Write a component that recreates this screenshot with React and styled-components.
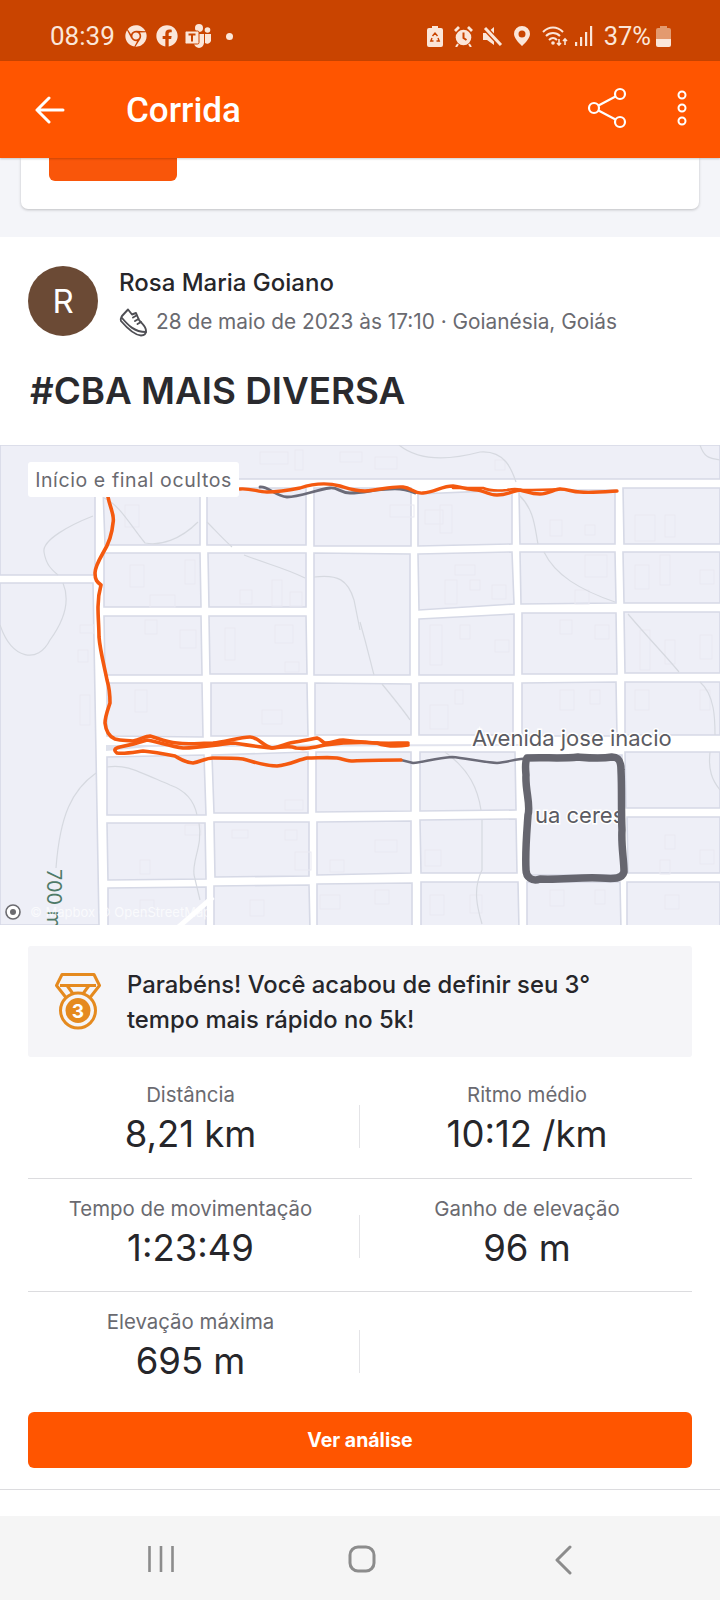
import React from "react";
import styled, { createGlobalStyle } from "styled-components";
import { FaChrome, FaFacebook } from "react-icons/fa";

const Global = createGlobalStyle`
  html, body { margin: 0; padding: 0; background: #fff; }
  * { box-sizing: border-box; }
`;

const Page = styled.div`
  width: 720px; height: 1600px; overflow: hidden; display: flex; flex-direction: column;
  font-family: Inter, "Liberation Sans", sans-serif; background: #fff;
`;
const StatusBar = styled.div`
  height: 61px; flex: none; background: #c94400; color: #fbe6d9; display: flex; align-items: center;
  justify-content: space-between; padding: 11px 49px 0 50px;
  font-family: Roboto, sans-serif;
`;
const StatusGroup = styled.div` display: flex; align-items: center; `;
const Slot = styled.span` display: flex; margin-left: ${p => p.$ml || 0}px; `;
const Clock = styled.span` font-size: 26px; `;
const Dot = styled.span`
  width: 7px; height: 7px; border-radius: 50%; background: #fbe6d9; margin-left: 14px;
`;
const Percent = styled.span` font-size: 25.5px; margin-left: 10px; `;
const AppBar = styled.header`
  height: 97px; flex: none; background: #ff5500; color: #fff; display: flex; align-items: center;
  padding: 0 33px 0 35px; position: relative; z-index: 2; box-shadow: 0 1px 2px rgba(0,0,0,.2);
`;
const AppTitle = styled.h1`
  margin: 2px 0 0 61px; flex: 1; font: 500 35px Roboto, sans-serif;
`;
const AppActions = styled.div` display: flex; align-items: center; gap: 48px; padding-bottom: 3px; `;
const Backdrop = styled.div`
  height: 79px; flex: none; background: #f4f5f9; padding: 0 21px; 
`;
const ClippedCard = styled.div`
  height: 51px; background: #fff; border-radius: 0 0 7px 7px; box-shadow: 0 1px 3px rgba(0,0,0,.22);
  padding: 0 28px;
`;
const ClippedButton = styled.div`
  width: 128px; height: 23px; background: #f9560a; border-radius: 0 0 6px 6px;
`;
const Post = styled.section` flex: 1; background: #fff; display: flex; flex-direction: column; `;
const Author = styled.div`
  display: flex; gap: 21px; padding: 29px 28px 0;
`;
const Avatar = styled.div`
  width: 70px; height: 70px; border-radius: 50%; background: #6b4a35; color: #fff; flex: none;
  display: flex; align-items: center; justify-content: center; font-size: 33px; font-weight: 400;
`;
const AuthorInfo = styled.div` display: flex; flex-direction: column; padding-top: 4px; `;
const AuthorName = styled.div`
  font-size: 24px; font-weight: 500; color: #26262a; line-height: 26px;
`;
const AuthorMeta = styled.div`
  display: flex; align-items: center; gap: 9px; margin-top: 11px; font-size: 20.8px; color: #6a6a70; line-height: 30px;
`;
const PostTitle = styled.h2`
  margin: 32px 0 0 30px; font-size: 36.8px; line-height: 44px; font-weight: 600; color: #2a2a2e;
`;
const MapWrap = styled.div`
  position: relative; height: 480px; margin-top: 32px; flex: none; overflow: hidden; background: #fff;
  svg { display: block; }
`;
const MapBadge = styled.div`
  position: absolute; left: 28px; top: 17px; height: 35px; width: 211px; background: #fff; border-radius: 3px;
  color: #6a6a70; font-size: 19.5px; display: flex; align-items: center; justify-content: center; letter-spacing: .6px;
`;
const Banner = styled.div`
  margin: 21px 28px 0; height: 111px; background: #f5f5f8; border-radius: 3px; display: flex; align-items: center;
  padding: 0 60px 0 27px; gap: 26px;
  svg { flex: none; }
`;
const BannerText = styled.div`
  font-size: 23.8px; line-height: 35px; font-weight: 500; color: #26262a;
`;
const Stats = styled.div` margin: 8px 28px 0; `;
const StatRow = styled.div`
  display: grid; grid-template-columns: 325px 9px 330px; height: ${p => p.$h}px;
  border-bottom: ${p => p.$line ? "1px solid #dcdcdf" : "none"};
`;
const StatCell = styled.div`
  display: flex; flex-direction: column; align-items: center; padding-top: ${p => p.$top}px;
`;
const StatLabel = styled.div` font-size: 20.4px; line-height: 26px; color: #6a6a70; `;
const StatValue = styled.div` font-size: 36.5px; line-height: 44px; color: #26262a; margin-top: 4px; `;
const Divider = styled.div`
  width: 1px; height: 43px; background: #e4e4e7; justify-self: end; margin: ${p => p.$top}px 2px 0 0;
`;
const Action = styled.button`
  margin: 0 28px; height: 56px; border: 0; border-radius: 6px; background: #ff5500; color: #fff; flex: none;
  font: 700 19.5px Inter, sans-serif;
`;
const Rule = styled.div` height: 1px; background: #dcdcdf; margin-top: 21px; flex: none; `;
const Spacer = styled.div` flex: 1; `;
const NavBar = styled.nav`
  height: 84px; flex: none; background: #f5f5f5; display: grid; grid-template-columns: 200px 206px auto; align-items: start;
  padding: 29px 0 0 148px;
`;

const blocks = [
  "0,445 720,445 720,479 95,479 95,575 0,575",
  "0,583 93,583 99,925 0,925",
  // row 1
  "103,488 200,488 200,545 105,545", "207,488 306,488 306,545 207,545", "314,488 411,488 411,546 314,546", "418,494 512,490 512,544 418,546", "519,490 615,490 615,544 520,544", "623,488 720,488 720,544 624,544",
  // row 2
  "104,553 200,553 201,607 104,607", "208,553 306,553 306,607 209,607", "314,553 410,554 410,630 410,675 314,675", "418,554 512,552 514,604 419,610", "520,552 615,552 616,603 521,604", "623,552 720,552 720,603 624,603",
  // row 3
  "104,616 201,616 202,675 105,675", "209,616 306,616 307,674 210,674", "419,619 514,614 514,675 419,675", "522,613 616,613 617,674 522,674", "624,612 720,612 720,673 625,673",
  // row 4
  "107,683 202,683 203,737 107,736", "211,683 307,683 308,736 211,736", "315,683 411,684 411,735 315,735", "419,683 513,683 513,735 419,735", "522,683 616,682 617,736 522,736", "625,682 720,682 720,735 625,735",
  // row 5
  "107,757 204,755 206,815 107,815", "212,755 308,752 308,813 214,813", "316,752 411,752 411,811 316,812", "420,752 515,752 516,810 420,811", "625,752 720,752 720,808 626,808",
  // loop block, rows 5 and 6
  "526,755 622,755 622,875 526,875",
  // row 6
  "107,823 205,823 206,879 108,880", "214,822 309,822 309,876 215,877", "317,822 411,821 411,873 317,875", "420,820 516,819 517,873 421,873", "627,817 720,817 720,873 628,873",
  // row 7
  "108,888 206,887 206,930 108,930", "214,886 309,885 310,930 214,930", "317,884 412,883 412,930 317,930", "421,882 518,882 519,930 421,930", "527,882 620,882 621,930 527,930", "627,882 720,882 720,930 627,930",
];

const streams = [
  "M93 516 C70 525 42 540 44 552 C46 565 52 570 58 575",
  "M63 583 C70 600 66 618 50 640 C38 664 12 660 0 625",
  "M104 498 C120 505 130 525 145 543 C160 546 180 540 198 522",
  "M207 522 C215 530 222 538 232 547 M244 555 C270 565 285 568 305 578",
  "M314 577 C338 574 348 580 354 600 L360 630",
  "M399 445 C420 462 450 460 480 452 C505 450 512 470 516 482",
  "M360 622 C368 650 370 660 374 675",
  "M519 495 C535 510 535 530 538 544 M544 552 C555 575 580 590 615 602",
  "M628 614 C650 640 665 655 679 672",
  "M700 445 C705 460 712 458 720 460",
  "M382 684 C395 700 405 712 410 720",
  "M107 767 C125 764 135 770 170 785 C190 792 195 805 197 815 M199 823 C203 845 192 860 194 875 L200 900",
  "M96 773 C72 790 60 815 56 868",
  "M445 752 C470 770 478 790 481 810 M482 820 L482 870 C472 890 478 910 482 924",
  "M700 682 C715 695 715 720 715 735 M710 752 C708 770 712 780 720 790",
];

const faint = [
  [125,505,14,22],[260,452,28,12],[295,450,8,20],[340,452,22,10],[375,457,22,12],[130,565,14,22],[185,560,10,24],[150,595,25,12],[240,590,12,14],[272,580,10,26],[290,592,12,14],
  [145,620,12,14],[180,630,16,18],[225,628,10,32],[275,625,18,18],[285,662,14,10],[80,625,14,8],[78,650,10,12],
  [390,505,24,12],[425,510,18,14],[440,505,12,28],[495,460,10,10],[455,565,20,10],[445,580,12,24],[470,580,10,10],[492,585,14,14],[550,520,12,16],[585,525,10,10],[585,555,22,22],[575,590,14,14],[635,515,20,26],[665,515,10,22],
  [635,565,14,24],[660,555,10,30],[700,570,14,14],[430,625,12,40],[460,625,10,14],[495,640,14,12],[560,620,12,14],[595,625,14,14],[640,630,10,40],[665,640,10,24],[700,635,12,24],
  [80,695,10,30],[135,690,12,22],[262,710,20,14],[430,705,18,24],[455,690,8,14],[560,690,14,20],[590,690,10,14],[635,690,14,20],[700,690,10,20],
  [285,800,18,10],[185,825,16,10],[232,830,16,8],[140,860,10,14],[285,830,12,10],[295,852,16,18],[330,860,14,12],[375,840,22,12],[425,850,16,16],[665,835,10,14],[660,860,10,14],[700,850,14,14],
  [375,890,14,14],[430,895,14,20],[470,895,12,18],[550,890,14,16],[595,890,10,14],[665,895,14,14],[250,900,14,16],[320,895,20,14],[140,900,14,14],
];

const Track = () => (
  <g fill="none" strokeLinecap="round" strokeLinejoin="round">
    <path stroke="#6b6b78" strokeWidth="2.8" d="M260 487 C268 486 275 496 287 497 C300 497 315 490 330 488 C338 487 340 493 350 493 C365 493 375 489 390 489 C400 488 408 490 415 493" />
    <path stroke="#f4590f" strokeWidth="3.4" d="M240 489 C250 488 258 492 267 492 C280 492 290 490 300 488 C312 484 325 482 340 486 C350 489 355 491 365 491 C380 490 392 486 403 487 C412 488 414 494 423 493 C435 492 442 486 453 486 C462 487 468 490 477 490 C483 490 487 495 497 495 C508 495 512 491 520 490 C528 492 532 494 540 494 C548 494 555 489 560 489 C568 489 572 492 580 492 C590 493 602 492 617 491" />
    <path stroke="#f4590f" strokeWidth="2.6" d="M453 488 C465 488 472 488 483 488 C490 491 498 491 507 490 C512 489 516 488 520 490 C530 490 545 490 560 489" />
    <path stroke="#6b6b78" strokeWidth="2.4" d="M401 760 L413 763 C425 762 435 758 452 757 C465 758 482 762 497 763 C508 762 515 759 530 758" />
    <path stroke="#f4590f" strokeWidth="3.6" d="M108 497 C110 508 115 515 113 523 C112 535 108 545 103 553 C99 560 95 567 95 573 C95 580 97 582 101 585 C99 592 98 600 98 607 C98 618 99 627 99 637 C100 650 104 665 107 680 C110 690 110 697 110 703 C107 712 105 717 105 723 C106 732 110 737 115 739 C122 741 127 740 133 741 C140 740 145 736 150 736 C158 738 165 742 177 743 C188 745 200 743 213 743 C225 742 240 737 250 737 C258 737 263 746 272 748 C280 747 285 744 290 743 C300 741 308 740 317 738 C321 739 322 742 325 743 C332 743 337 740 343 740 C350 741 358 742 365 742 C378 744 395 743 408 743" />
    <path stroke="#f4590f" strokeWidth="3.6" d="M408 745 C395 747 385 746 377 743 C360 742 340 743 325 745 C312 748 306 749 296 748 C288 745 280 748 272 748 C258 747 248 745 233 743 C215 745 198 748 183 748 C170 746 158 742 147 740 C138 743 130 745 120 747 C115 748 113 750 117 753 C125 754 135 752 143 751 C155 752 165 754 175 756 C182 760 186 763 193 763 C200 762 206 758 213 758 C225 758 235 758 243 759 C255 762 265 766 277 766 C288 765 298 760 307 758 C318 758 328 757 337 758 C343 759 348 761 353 761 C368 760 385 760 401 760" />
    <path stroke="#66666f" strokeWidth="7.5" d="M527 758 C545 757 560 759 578 757 C590 758 600 759 612 757 C618 757 621 760 621 770 C622 790 621 810 622 830 C621 845 624 860 624 872 C622 879 615 879 600 878 C580 877 560 880 540 879 C532 882 526 877 526 870 C525 850 527 830 528 815 C531 805 525 790 526 775 C525 765 526 760 527 758 Z" />
  </g>
);

const MapArt = () => (
  <svg width="720" height="480" viewBox="0 445 720 480" fontFamily="Inter, sans-serif">
    <rect x="0" y="445" width="720" height="480" fill="#ffffff" />
    <g fill="#eeeff7" stroke="#d6d9e6" strokeWidth="1.6">
      {blocks.map((p, i) => <polygon key={i} points={p} />)}
    </g>
    <g fill="none" stroke="#e9e9f2" strokeWidth="1">
      {faint.map((r, i) => <rect key={i} x={r[0]} y={r[1]} width={r[2]} height={r[3]} />)}
    </g>
    <g fill="none" stroke="#d6d9e0" strokeWidth="1.2">
      {streams.map((d, i) => <path key={i} d={d} />)}
    </g>
    <path d="M106 746 L520 745" stroke="#e2e4ee" strokeWidth="2" />
    <path d="M106 745 L170 745 L106 751 Z" fill="#dfe2ec" />
    <path d="M213 897 L175 930" stroke="#fff" strokeWidth="5" />
    <text x="47" y="869" transform="rotate(90 47 869)" fontSize="20" fill="#4f7a68">700 m</text>
    <text x="472" y="746" fontSize="22" fill="#5b5b62" stroke="#fff" strokeWidth="3" paintOrder="stroke">Avenida jose inacio</text>
    <text x="535" y="823" fontSize="22" fill="#5b5b62" stroke="#fff" strokeWidth="3" paintOrder="stroke">ua ceres</text>
    <Track />
    <circle cx="13" cy="912" r="7" fill="#fff" stroke="#6b6b70" strokeWidth="1.6" />
    <circle cx="13" cy="912" r="3" fill="#6b6b70" />
    <text x="30" y="917" fontSize="13" fill="#fff" fillOpacity=".7">© Mapbox © OpenStreetMap</text>
  </svg>
);

const Teams = () => (
  <svg width="27" height="24" viewBox="0 0 27 24">
    <circle cx="14" cy="4" r="4" fill="#fbe6d9" />
    <circle cx="22.500" cy="6" r="2.800" fill="#fbe6d9" />
    <path fill="#fbe6d9" d="M9 10h10v9a6 6 0 0 1-5 5 6 6 0 0 1-5-4zM20 10h6v7a4 4 0 0 1-6 2z" />
    <rect x="0" y="7" width="14" height="13" rx="1.500" fill="#fbe6d9" stroke="#c94400" strokeWidth="1" />
    <path d="M3.500 10.500h7M7 10.500v7" stroke="#c94400" strokeWidth="2" />
  </svg>
);
const Recycle = () => (
  <svg width="16" height="21" viewBox="0 0 16 21">
    <path fill="#fbe6d9" d="M5 0h6v2h3a2 2 0 0 1 2 2v15a2 2 0 0 1-2 2H2a2 2 0 0 1-2-2V4a2 2 0 0 1 2-2h3z" />
    <path fill="none" stroke="#c94400" strokeWidth="1.400" d="M5.500 10l2.500-3 2.500 3M11 12l1.200 3H9.500M6.500 15H3.800L5 12" />
  </svg>
);
const Alarm = () => (
  <svg width="21" height="21" viewBox="0 0 21 21">
    <circle cx="10.500" cy="11.500" r="7.800" fill="#fbe6d9" />
    <path d="M10.500 6.500v5.500l3 2" stroke="#c94400" strokeWidth="2" fill="none" />
    <path d="M2 5l4-4M19 5l-4-4" stroke="#fbe6d9" strokeWidth="2.800" />
    <path d="M5 18l-2 3M16 18l2 3" stroke="#fbe6d9" strokeWidth="2" />
  </svg>
);
const Mute = () => (
  <svg width="21" height="21" viewBox="0 0 21 21">
    <path fill="#fbe6d9" d="M1 7h4l7-6v18l-7-5H1z" />
    <path d="M3 2l16 17" stroke="#c94400" strokeWidth="5.500" />
    <path d="M3 2l16 17" stroke="#fbe6d9" strokeWidth="3" />
  </svg>
);
const Pin = () => (
  <svg width="16" height="20" viewBox="0 0 16 20">
    <path fillRule="evenodd" fill="#fbe6d9" d="M8 0a8 8 0 0 1 8 8c0 5-8 12-8 12S0 13 0 8a8 8 0 0 1 8-8zm0 4.500a3.500 3.500 0 1 0 0 7 3.500 3.500 0 0 0 0-7z" />
  </svg>
);
const Wifi = () => (
  <svg width="27" height="20" viewBox="0 0 27 20" fill="none" stroke="#fbe6d9" strokeWidth="2">
    <path d="M1 6c6-6 14-6 20 0M4 10c4-4 10-4 14 0M7 14c2.500-2.500 5.500-2.500 8 0" />
    <circle cx="11" cy="17" r="1.800" fill="#fbe6d9" stroke="none" />
    <path d="M17 13v6M15 17l2 2 2-2M23 19v-6M21 15l2-2 2 2" strokeWidth="1.600" />
  </svg>
);
const Signal = () => (
  <svg width="20" height="20" viewBox="0 0 20 20" fill="#fbe6d9">
    <rect x="1" y="16" width="2.200" height="4" /><rect x="6" y="11" width="2.200" height="9" /><rect x="11" y="6" width="2.200" height="14" /><rect x="16" y="0" width="2.200" height="20" />
  </svg>
);
const Battery = () => (
  <svg width="15" height="21" viewBox="0 0 15 21">
    <path fill="#e39a6f" d="M4 0h7v2h2a2 2 0 0 1 2 2v9H0V4a2 2 0 0 1 2-2h2z" />
    <path fill="#fbe6d9" d="M0 13h15v6a2 2 0 0 1-2 2H2a2 2 0 0 1-2-2z" />
  </svg>
);
const BackArrow = () => (
  <svg width="30" height="28" viewBox="0 0 30 28" fill="none" stroke="#fff" strokeWidth="3" strokeLinecap="round" strokeLinejoin="round">
    <path d="M2 14h26M14 2L2 14l12 12" />
  </svg>
);
const Share = () => (
  <svg width="42" height="42" viewBox="0 0 42 42" fill="none" stroke="#fff" strokeWidth="2.200">
    <circle cx="7" cy="21" r="5" /><circle cx="33" cy="7" r="5" /><circle cx="33" cy="35" r="5" />
    <path d="M11.500 18.500L28.500 9.500M11.500 23.500L28.500 32.500" />
  </svg>
);
const More = () => (
  <svg width="10" height="36" viewBox="0 0 10 36" fill="none" stroke="#fff" strokeWidth="2">
    <circle cx="5" cy="5" r="3.500" /><circle cx="5" cy="18" r="3.500" /><circle cx="5" cy="31" r="3.500" />
  </svg>
);
const Shoe = () => (
  <svg width="28" height="29" viewBox="0 0 28 29" fill="none" stroke="#4e4e54" strokeWidth="1.900" strokeLinejoin="round" strokeLinecap="round">
    <path d="M9 1.500L13 6.500L17 5L20 12C23 16 27 18 27 23C27 26 25 27.500 22 27.500C15 27 8 20 2 13C1 11 2 10 3 8Z" />
    <path d="M3 10C9 17 15 24 27 24" />
    <path d="M14 9.500l3.500-2M16 13l3.500-2M18.500 16l3.500-2" />
  </svg>
);
const Medal = () => (
  <svg width="46" height="57" viewBox="0 0 46 57" fill="none" stroke="#e58a1f" strokeWidth="3" strokeLinejoin="round">
    <path d="M7 1.500h32l5.500 11-11 14H12.500l-11-14z" />
    <path d="M5 12.500h36M12 12.500l8 11M34 12.500l-8 11" />
    <circle cx="23" cy="37.500" r="17.500" fill="#f5f5f8" />
    <circle cx="23" cy="37.500" r="12.500" fill="#e58a1f" stroke="none" />
    <text x="23" y="44.500" textAnchor="middle" fontSize="19" fontWeight="700" fill="#fff" stroke="none" fontFamily="Inter, sans-serif">3</text>
  </svg>
);
const NavLines = () => (
  <svg width="26" height="28" viewBox="0 0 26 28" stroke="#8c8c8c" strokeWidth="2.600">
    <path d="M1.500 1v26M13 1v26M24.500 1v26" />
  </svg>
);
const NavHome = () => (
  <svg width="28" height="28" viewBox="0 0 28 28" fill="none" stroke="#8c8c8c" strokeWidth="3">
    <rect x="2" y="2" width="24" height="24" rx="8" />
  </svg>
);
const NavBack = () => (
  <svg width="18" height="30" viewBox="0 0 18 30" fill="none" stroke="#8c8c8c" strokeWidth="3" strokeLinecap="round" strokeLinejoin="round">
    <path d="M16 2L3 15l13 13" />
  </svg>
);

const stats = [
  { h: 114, line: true, top: 17, dTop: 40, cells: [["Distância", "8,21 km"], ["Ritmo médio", "10:12 /km"]] },
  { h: 113, line: true, top: 17, dTop: 36, cells: [["Tempo de movimentação", "1:23:49"], ["Ganho de elevação", "96 m"]] },
  { h: 120, line: false, top: 17, dTop: 38, cells: [["Elevação máxima", "695 m"]] },
];

export default function App() {
  return (
    <Page>
      <Global />
      <StatusBar>
        <StatusGroup>
          <Clock>08:39</Clock>
          <Slot $ml={10}><FaChrome size={22} /></Slot>
          <Slot $ml={9}><FaFacebook size={22} /></Slot>
          <Slot $ml={7}><Teams /></Slot>
          <Dot />
        </StatusGroup>
        <StatusGroup>
          <Slot><Recycle /></Slot>
          <Slot $ml={10}><Alarm /></Slot>
          <Slot $ml={8}><Mute /></Slot>
          <Slot $ml={11}><Pin /></Slot>
          <Slot $ml={12}><Wifi /></Slot>
          <Slot $ml={5}><Signal /></Slot>
          <Percent>37%</Percent>
          <Slot $ml={5}><Battery /></Slot>
        </StatusGroup>
      </StatusBar>
      <AppBar>
        <BackArrow />
        <AppTitle>Corrida</AppTitle>
        <AppActions><Share /><More /></AppActions>
      </AppBar>
      <Backdrop>
        <ClippedCard><ClippedButton /></ClippedCard>
      </Backdrop>
      <Post>
        <Author>
          <Avatar>R</Avatar>
          <AuthorInfo>
            <AuthorName>Rosa Maria Goiano</AuthorName>
            <AuthorMeta><Shoe /><span>28 de maio de 2023 às 17:10 · Goianésia, Goiás</span></AuthorMeta>
          </AuthorInfo>
        </Author>
        <PostTitle>#CBA MAIS DIVERSA</PostTitle>
        <MapWrap>
          <MapArt />
          <MapBadge>Início e final ocultos</MapBadge>
        </MapWrap>
        <Banner>
          <Medal />
          <BannerText>Parabéns! Você acabou de definir seu 3° tempo mais rápido no 5k!</BannerText>
        </Banner>
        <Stats>
          {stats.map((r, i) => (
            <StatRow key={i} $h={r.h} $line={r.line}>
              <StatCell $top={r.top}>
                <StatLabel>{r.cells[0][0]}</StatLabel>
                <StatValue>{r.cells[0][1]}</StatValue>
              </StatCell>
              <Divider $top={r.dTop} />
              {r.cells[1] && (
                <StatCell $top={r.top}>
                  <StatLabel>{r.cells[1][0]}</StatLabel>
                  <StatValue>{r.cells[1][1]}</StatValue>
                </StatCell>
              )}
            </StatRow>
          ))}
        </Stats>
        <Action>Ver análise</Action>
        <Rule />
        <Spacer />
      </Post>
      <NavBar><NavLines /><NavHome /><NavBack /></NavBar>
    </Page>
  );
}
